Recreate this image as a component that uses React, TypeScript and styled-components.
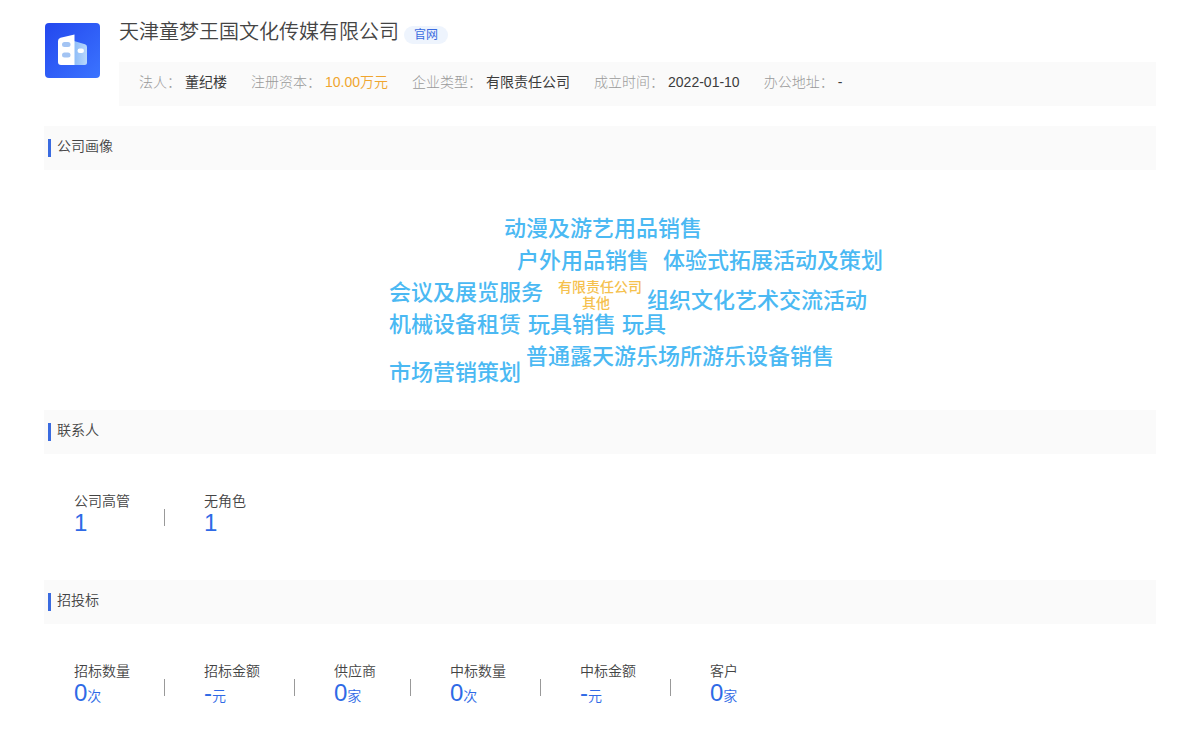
import React from 'react';
import styled, { createGlobalStyle } from 'styled-components';

const GlobalStyle = createGlobalStyle`
  * { box-sizing: border-box; }
  body {
    margin: 0;
    background: #fff;
    color: #444;
    font-family: "Liberation Sans", "Noto Sans CJK SC", sans-serif;
    font-size: 14px;
    font-weight: 350;
    line-height: 20px;
  }
`;

const Page = styled.main`
  padding: 20px 44px;
`;

const Header = styled.header`
  display: flex;
  gap: 19px;
  margin-bottom: 20px;
`;

const Logo = styled.svg`
  flex: none;
  width: 56px;
  height: 56px;
  margin-top: 2px;
`;

const Summary = styled.div`
  flex: 1;
  min-width: 0;
`;

const TitleRow = styled.div`
  display: flex;
  align-items: flex-end;
  gap: 5px;
  height: 24px;
  margin-bottom: 18px;
`;

const Title = styled.h1`
  margin: 0;
  font-size: 20px;
  line-height: 24px;
  font-weight: 350;
`;

const SiteLink = styled.a`
  padding: 0 10px;
  border-radius: 9px;
  background: #eef4fd;
  color: #3a6be0;
  font-size: 12px;
  font-weight: 400;
  line-height: 18px;
  text-decoration: none;
`;

const Facts = styled.dl`
  display: flex;
  flex-wrap: wrap;
  column-gap: 24px;
  margin: 0;
  padding: 10px 20px 14px;
  background: #fafafa;
`;

const Fact = styled.div`
  display: flex;
  gap: 4px;
`;

const FactLabel = styled.dt`
  color: #999;
  font-weight: 300;
`;

const FactValue = styled.dd<{ $accent?: boolean }>`
  margin: 0;
  color: ${(p) => (p.$accent ? '#f0a52e' : '#3c3c3c')};
  font-weight: ${(p) => (p.$accent ? 350 : 400)};
`;

const SectionTitle = styled.h2`
  display: flex;
  align-items: flex-start;
  gap: 6px;
  height: 44px;
  margin: 0;
  padding: 10px 4px;
  background: #fafafa;
  font-size: 14px;
  line-height: 20px;
  font-weight: 350;

  &::before {
    content: "";
    width: 3px;
    height: 18px;
    margin-top: 3px;
    background: #3a6be0;
  }
`;

const Cloud = styled.div`
  position: relative;
  width: 600px;
  max-width: 100%;
  height: 240px;
  margin: 0 auto;
`;

const Tag = styled.span<{ $x: number; $y: number; $minor?: boolean }>`
  position: absolute;
  left: ${(p) => p.$x}px;
  top: ${(p) => p.$y}px;
  color: ${(p) => (p.$minor ? '#f5c14e' : '#4bb9f3')};
  font-size: ${(p) => (p.$minor ? 14 : 22)}px;
  line-height: ${(p) => (p.$minor ? 16 : 32)}px;
  font-weight: 500;
  white-space: nowrap;
`;

const Stats = styled.ul`
  display: flex;
  margin: 0;
  padding: 37px 30px 42px;
  list-style: none;
`;

const Stat = styled.li`
  display: flex;

  &:not(:last-child)::after {
    content: "";
    width: 1px;
    height: 17px;
    margin: 18px 39px 0 34px;
    background: #999;
  }
`;

const StatLabel = styled.div`
  line-height: 20px;
`;

const StatValue = styled.div`
  color: #2f6ae6;
  line-height: 24px;
`;

const Figure = styled.span`
  font-size: 24px;
`;

const facts = [
  { label: '法人：', value: '董纪楼' },
  { label: '注册资本：', value: '10.00万元', accent: true },
  { label: '企业类型：', value: '有限责任公司' },
  { label: '成立时间：', value: '2022-01-10' },
  { label: '办公地址：', value: '-' },
];

const tags = [
  { text: '动漫及游艺用品销售', x: 204, y: 43 },
  { text: '户外用品销售', x: 217, y: 75 },
  { text: '体验式拓展活动及策划', x: 363, y: 75 },
  { text: '会议及展览服务', x: 89, y: 107 },
  { text: '有限责任公司', x: 258, y: 109, minor: true },
  { text: '其他', x: 282, y: 125, minor: true },
  { text: '组织文化艺术交流活动', x: 347, y: 115 },
  { text: '机械设备租赁', x: 89, y: 139 },
  { text: '玩具销售', x: 228, y: 139 },
  { text: '玩具', x: 322, y: 139 },
  { text: '普通露天游乐场所游乐设备销售', x: 226, y: 171 },
  { text: '市场营销策划', x: 89, y: 187 },
];

type StatItem = { label: string; value: string; unit?: string };

const contacts: StatItem[] = [
  { label: '公司高管', value: '1' },
  { label: '无角色', value: '1' },
];

const bids: StatItem[] = [
  { label: '招标数量', value: '0', unit: '次' },
  { label: '招标金额', value: '-', unit: '元' },
  { label: '供应商', value: '0', unit: '家' },
  { label: '中标数量', value: '0', unit: '次' },
  { label: '中标金额', value: '-', unit: '元' },
  { label: '客户', value: '0', unit: '家' },
];

function StatList({ items }: { items: StatItem[] }) {
  return (
    <Stats>
      {items.map((item) => (
        <Stat key={item.label}>
          <div>
            <StatLabel>{item.label}</StatLabel>
            <StatValue>
              <Figure>{item.value}</Figure>
              {item.unit}
            </StatValue>
          </div>
        </Stat>
      ))}
    </Stats>
  );
}

function CompanyLogo() {
  return (
    <Logo viewBox="0 0 56 56" aria-hidden="true">
      <defs>
        <linearGradient id="logo-bg" x1="0" y1="0" x2="1" y2="1">
          <stop offset="0" stopColor="#2347ee" />
          <stop offset="1" stopColor="#3b74ff" />
        </linearGradient>
        <linearGradient id="logo-wing" x1="0" y1="0" x2="1" y2="0">
          <stop offset="0" stopColor="#8dbcf8" />
          <stop offset="1" stopColor="#b9d8fc" />
        </linearGradient>
      </defs>
      <rect x="1" y="1" width="55" height="55" rx="4" fill="url(#logo-bg)" />
      <path d="M30 19 L41 22.2 Q43 23 43 25 V40.5 Q43 43 40.5 43 H30 Z" fill="url(#logo-wing)" />
      <path d="M14 19 Q14 16.500 16.500 15.800 L30.500 12.500 V43 H17 Q14 43 14 40 Z" fill="#fff" />
      <rect x="18" y="20" width="8.500" height="5" rx="2.500" fill="#a3c4f3" />
      <rect x="18" y="30.500" width="8.500" height="5" rx="2.500" fill="#a3c4f3" />
      <rect x="33.500" y="26.500" width="6.500" height="4.500" rx="2.200" fill="#fff" />
    </Logo>
  );
}

export default function App() {
  return (
    <>
      <GlobalStyle />
      <Page>
        <Header>
          <CompanyLogo />
          <Summary>
            <TitleRow>
              <Title>天津童梦王国文化传媒有限公司</Title>
              <SiteLink href="#">官网</SiteLink>
            </TitleRow>
            <Facts>
              {facts.map((f) => (
                <Fact key={f.label}>
                  <FactLabel>{f.label}</FactLabel>
                  <FactValue $accent={f.accent}>{f.value}</FactValue>
                </Fact>
              ))}
            </Facts>
          </Summary>
        </Header>

        <section>
          <SectionTitle>公司画像</SectionTitle>
          <Cloud>
            {tags.map((t) => (
              <Tag key={t.text} $x={t.x} $y={t.y} $minor={t.minor}>
                {t.text}
              </Tag>
            ))}
          </Cloud>
        </section>

        <section>
          <SectionTitle>联系人</SectionTitle>
          <StatList items={contacts} />
        </section>

        <section>
          <SectionTitle>招投标</SectionTitle>
          <StatList items={bids} />
        </section>
      </Page>
    </>
  );
}
